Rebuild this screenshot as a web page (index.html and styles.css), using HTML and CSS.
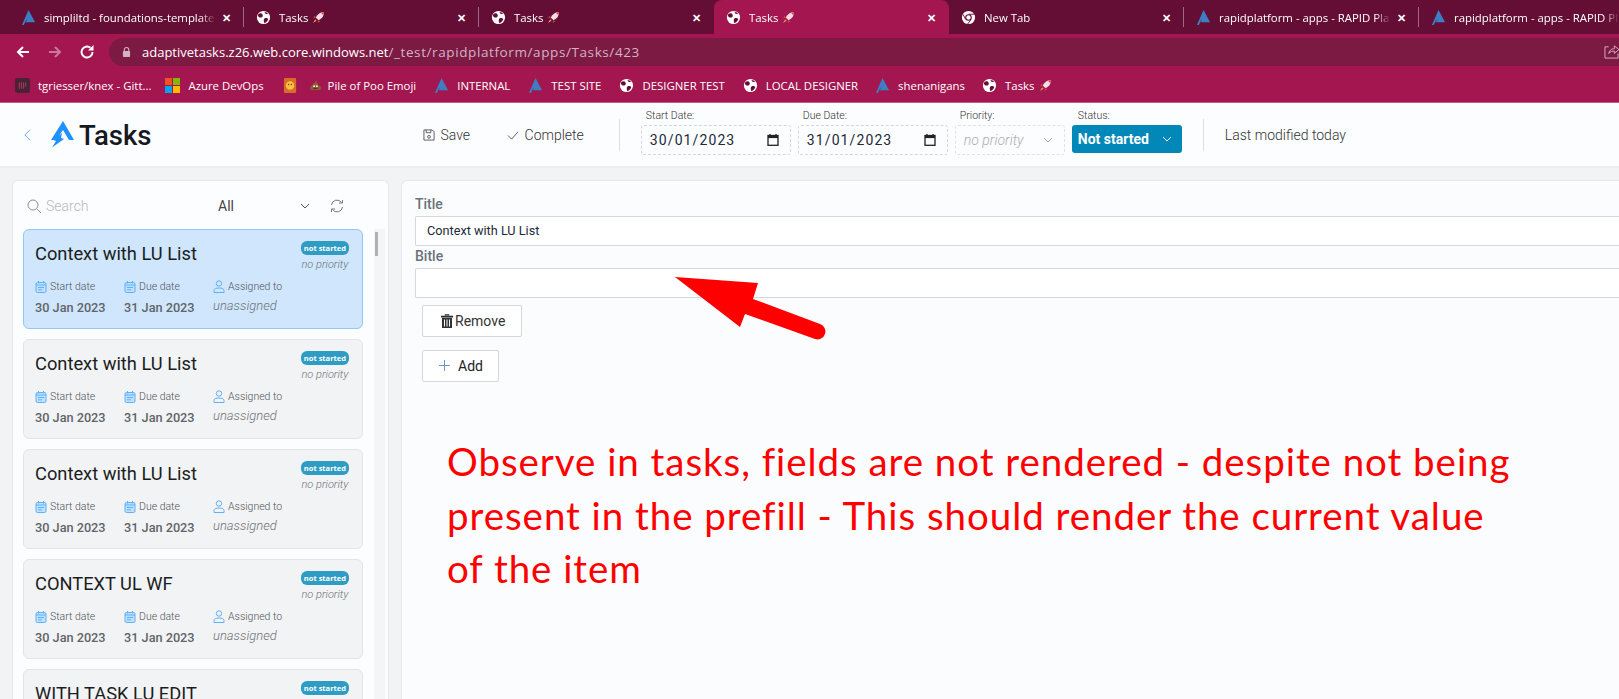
FILE: index.html
```html
<!DOCTYPE html>
<html lang="en">
<head>
  <meta charset="UTF-8" />
  <title>Tasks</title>
  <link rel="stylesheet" href="styles.css">
</head>
<body>

<svg class="defs" width="0" height="0">
  <symbol id="favA" viewBox="0 0 14 16">
    <path d="M7 0 L14 13 L10.500 13 L7 8.500 L4.500 11 L2 16 L0 16 Z" fill="#3d7fc4"/>
    <path d="M7 6 L11 13 L4 13 Z" fill="#3d7fc4"/>
  </symbol>
  <symbol id="globe" viewBox="0 0 16 16">
    <circle cx="8" cy="8" r="7" fill="#fff"/>
    <path d="M2 5 C4 3 6 3 7 5 C8 7 6 8 5 8 C3 8 2 7 2 5 Z M9 9 C11 8 13 9 13 10 C12 12 11 13 9 14 C8 12 8 10 9 9 Z M9 2 C11 2 12 3 13 4 C11 5 10 4 9 2 Z" fill="#640d35"/>
  </symbol>
  <symbol id="rocket" viewBox="0 0 14 14">
    <path d="M13 1 C9 1 6 3 4 7 L7 10 C11 8 13 5 13 1 Z" fill="#f3dfe4"/>
    <path d="M13 1 C11.500 1 10.500 1.300 9.500 1.800 L12.200 4.500 C12.700 3.500 13 2.500 13 1 Z" fill="#e0455a"/>
    <path d="M4 7 L1 8 L3 5 Z M7 10 L6 13 L9 11 Z" fill="#d9405a"/>
    <path d="M3.500 9 L5 10.500 L1 13 Z" fill="#f29b3f"/>
  </symbol>
  <symbol id="cal" viewBox="0 0 12 13">
    <rect x="1" y="2.500" width="10" height="10" rx="1.500" fill="#bfe0ff" stroke="#5fb0fb"/>
    <path d="M3.500 1 V3.500 M8.500 1 V3.500 M1 5 H11 M3 7.500 H9 M3 9.800 H7" fill="none" stroke="#5fb0fb"/>
  </symbol>
  <symbol id="user" viewBox="0 0 12 13">
    <circle cx="6" cy="3.500" r="2.700" fill="none" stroke="#5fb0fb"/>
    <path d="M1 12.500 V10.500 C1 8.800 3 8 6 8 C9 8 11 8.800 11 10.500 V12.500 Z" fill="none" stroke="#5fb0fb"/>
  </symbol>
  <symbol id="dateIcon" viewBox="0 0 12 12">
    <path d="M3 0 V2 M9 0 V2" stroke="#222" stroke-width="1.300"/>
    <rect x="1" y="1.500" width="10" height="9.800" fill="none" stroke="#222" stroke-width="1.300"/>
    <rect x="1" y="1.500" width="10" height="2.600" fill="#222"/>
  </symbol>
</svg>

<div class="tabstrip">
  <div class="tab sep">
    <svg class="fav"><use href="#favA"/></svg>
    <span class="tabText">simpliltd - foundations-template</span>
    <span class="tabClose">✕</span>
  </div>
  <div class="tab sep">
    <svg class="fav"><use href="#globe"/></svg>
    <span class="tabText">Tasks <svg class="rocket"><use href="#rocket"/></svg></span>
    <span class="tabClose">✕</span>
  </div>
  <div class="tab">
    <svg class="fav"><use href="#globe"/></svg>
    <span class="tabText">Tasks <svg class="rocket"><use href="#rocket"/></svg></span>
    <span class="tabClose">✕</span>
  </div>
  <div class="tab active">
    <svg class="fav"><use href="#globe"/></svg>
    <span class="tabText">Tasks <svg class="rocket"><use href="#rocket"/></svg></span>
    <span class="tabClose">✕</span>
  </div>
  <div class="tab sep">
    <svg class="fav" viewBox="0 0 16 16">
      <circle cx="8" cy="8" r="7" fill="#fff"/>
      <circle cx="8" cy="8" r="3.500" fill="#640d35"/>
      <circle cx="8" cy="8" r="2.300" fill="#fff"/>
      <path d="M8 4.500 H14.500 M5 10 L2 4.500 M10.500 10.500 L7 15" stroke="#640d35" stroke-width="1"/>
    </svg>
    <span class="tabText">New Tab</span>
    <span class="tabClose">✕</span>
  </div>
  <div class="tab sep">
    <svg class="fav"><use href="#favA"/></svg>
    <span class="tabText">rapidplatform - apps - RAPID Pla</span>
    <span class="tabClose">✕</span>
  </div>
  <div class="tab last">
    <svg class="fav"><use href="#favA"/></svg>
    <span class="tabText">rapidplatform - apps - RAPID Pl</span>
  </div>
</div>

<div class="toolbar">
  <svg class="navIcon" viewBox="0 0 16 16"><path d="M14 8 H3 M8 3 L3 8 L8 13" fill="none" stroke="#fff" stroke-width="2"/></svg>
  <svg class="navIcon" viewBox="0 0 16 16"><path d="M2 8 H13 M8 3 L13 8 L8 13" fill="none" stroke="#c9799b" stroke-width="2"/></svg>
  <svg class="navIcon" viewBox="0 0 16 16"><path d="M13.500 8 A5.500 5.500 0 1 1 11.500 3.800" fill="none" stroke="#fff" stroke-width="2"/><path d="M14.500 1 V6.500 H9 Z" fill="#fff"/></svg>
  <div class="omnibox">
    <svg class="lock" viewBox="0 0 10 12"><path d="M2.500 5 V3.500 A2.500 2.500 0 0 1 7.500 3.500 V5" fill="none" stroke="#d3b3c2" stroke-width="1.200"/><rect x="1" y="5" width="8" height="6.500" rx="1" fill="#d3b3c2"/></svg>
    <span class="host">adaptivetasks.z26.web.core.windows.net</span><span class="path">/_test/rapidplatform/apps/Tasks/423</span>
    <svg class="share" viewBox="0 0 16 16"><path d="M5 3 H1 V15 H15 V10 M5 10 C6 6 9 5 11 5 V2 L16 6 L11 10 V7.500 C9 7.500 7 8 5 10 Z" fill="none" stroke="#d3b3c2"/></svg>
  </div>
</div>

<div class="bookmarks">
  <div class="bm bmFirst"><svg class="fav" viewBox="0 0 14 14"><rect width="14" height="14" rx="2" fill="#4a2238"/><path d="M4 4 V10 M6 4 V10 M8 4 V10 M10 4 V8" stroke="#a03a52" stroke-width="1"/></svg>tgriesser/knex - Gitt...</div>
  <div class="bm bmAzure"><svg class="fav" viewBox="0 0 15 15"><rect width="7" height="7" fill="#f25022"/><rect x="8" width="7" height="7" fill="#7fba00"/><rect y="8" width="7" height="7" fill="#00a4ef"/><rect x="8" y="8" width="7" height="7" fill="#ffb900"/></svg>Azure DevOps</div>
  <div class="bm bmIcon"><svg class="fav" viewBox="0 0 14 16"><rect width="13" height="16" rx="1" fill="#d96b2b"/><circle cx="6.500" cy="8" r="4.500" fill="#f7c33c"/><circle cx="5" cy="7" r=".8" fill="#7a3b10"/><circle cx="8" cy="7" r=".8" fill="#7a3b10"/></svg></div>
  <div class="bm bmWide"><svg class="poo" viewBox="0 0 14 12"><path d="M7 1 C9 1 9 3 8.500 3.500 C10 3.500 10.500 5 10 6 C12 6 13 7.500 13 9 C13 10.500 12 11 10 11 H4 C2 11 1 10.500 1 9 C1 7.500 2 6 4 6 C3.500 5 4 3.500 5.500 3.500 C6.500 3 7 2 7 1 Z" fill="#8f5a38"/><circle cx="5.500" cy="6.800" r="1" fill="#fff"/><circle cx="8.500" cy="6.800" r="1" fill="#fff"/><path d="M4.500 9 H9.500" stroke="#3f2416"/></svg>Pile of Poo Emoji</div>
  <div class="bm bmWide"><svg class="fav"><use href="#favA"/></svg>INTERNAL</div>
  <div class="bm bmWide"><svg class="fav"><use href="#favA"/></svg>TEST SITE</div>
  <div class="bm bmWide"><svg class="fav"><use href="#globe"/></svg>DESIGNER TEST</div>
  <div class="bm"><svg class="fav"><use href="#globe"/></svg>LOCAL DESIGNER</div>
  <div class="bm"><svg class="fav"><use href="#favA"/></svg>shenanigans</div>
  <div class="bm"><svg class="fav"><use href="#globe"/></svg>Tasks <svg class="rocket"><use href="#rocket"/></svg></div>
</div>

<div class="header">
  <svg class="back" viewBox="0 0 8 14"><path d="M7 1 L1 7 L7 13" fill="none" stroke="#4d9cf5" stroke-width="1"/></svg>
  <svg class="logo" viewBox="0 0 23 27">
    <path d="M12 0 L23 19 H18 L12 9 L5 19 H0 Z" fill="#1e90ff"/>
    <path d="M11 12 L10 17 L13 18 L1 26.500 L5 20 L2.500 19 Z" fill="#1e90ff"/>
  </svg>
  <div class="appTitle">Tasks</div>
  <div class="action actSave">
    <svg class="actIcon" viewBox="0 0 13 13"><path d="M1 1 H10 L12 3 V12 H1 Z M3.500 1 V4 H8.500 V1" fill="none" stroke="#555"/><circle cx="6.500" cy="8.500" r="1.500" fill="none" stroke="#555"/></svg>
    Save
  </div>
  <div class="action actComplete">
    <svg class="actIcon" viewBox="0 0 13 13"><path d="M1 7 L5 11 L12 3" fill="none" stroke="#555"/></svg>
    Complete
  </div>
  <div class="vline"></div>
  <div class="field fieldDate">
    <label>Start Date:</label>
    <div class="dashed"><span>30/01/2023</span><svg class="dateIcon"><use href="#dateIcon"/></svg></div>
  </div>
  <div class="field fieldDate">
    <label>Due Date:</label>
    <div class="dashed"><span>31/01/2023</span><svg class="dateIcon"><use href="#dateIcon"/></svg></div>
  </div>
  <div class="field fieldPriority">
    <label>Priority:</label>
    <div class="dashed lightDash"><em>no priority</em><svg class="chev" viewBox="0 0 10 6"><path d="M1 1 L5 5 L9 1" fill="none" stroke="#aaa"/></svg></div>
  </div>
  <div class="field fieldStatus">
    <label>Status:</label>
    <div class="statusBtn"><span>Not started</span><svg class="chev" viewBox="0 0 10 6"><path d="M1 1 L5 5 L9 1" fill="none" stroke="#fff"/></svg></div>
  </div>
  <div class="vline vlineStatus"></div>
  <div class="modified">Last modified today</div>
</div>

<div class="content">
  <div class="sidebar">
    <div class="searchRow">
      <svg class="searchIcon" viewBox="0 0 15 15"><circle cx="6" cy="6" r="5" fill="none" stroke="#8a8f96"/><path d="M10 10 L14 14" stroke="#8a8f96"/></svg>
      <span class="searchText">Search</span>
      <span class="filterText">All</span>
      <svg class="filterChev" viewBox="0 0 10 6"><path d="M1 1 L5 5 L9 1" fill="none" stroke="#555"/></svg>
      <svg class="refresh" viewBox="0 0 14 14"><path d="M1.500 6 A5.500 5.500 0 0 1 11.500 3.500 M12.500 8 A5.500 5.500 0 0 1 2.500 10.500" fill="none" stroke="#777"/><path d="M9 4 H12.500 V1 M5 10 H1.500 V13" fill="none" stroke="#777"/></svg>
    </div>
    <div class="listWrap">
      <div class="list">
        <div class="card selected">
          <div class="cardTop"><div class="cardTitle">Context with LU List</div><div class="cardState"><span class="badge">not started</span><em>no priority</em></div></div>
          <div class="cardCols">
            <div class="col colDate"><div class="colLabel"><svg class="colIcon"><use href="#cal"/></svg>Start date</div><div class="colValue">30 Jan 2023</div></div>
            <div class="col colDate"><div class="colLabel"><svg class="colIcon"><use href="#cal"/></svg>Due date</div><div class="colValue">31 Jan 2023</div></div>
            <div class="col"><div class="colLabel"><svg class="colIcon"><use href="#user"/></svg>Assigned to</div><div class="colNone">unassigned</div></div>
          </div>
        </div>
        <div class="card">
          <div class="cardTop"><div class="cardTitle">Context with LU List</div><div class="cardState"><span class="badge">not started</span><em>no priority</em></div></div>
          <div class="cardCols">
            <div class="col colDate"><div class="colLabel"><svg class="colIcon"><use href="#cal"/></svg>Start date</div><div class="colValue">30 Jan 2023</div></div>
            <div class="col colDate"><div class="colLabel"><svg class="colIcon"><use href="#cal"/></svg>Due date</div><div class="colValue">31 Jan 2023</div></div>
            <div class="col"><div class="colLabel"><svg class="colIcon"><use href="#user"/></svg>Assigned to</div><div class="colNone">unassigned</div></div>
          </div>
        </div>
        <div class="card">
          <div class="cardTop"><div class="cardTitle">Context with LU List</div><div class="cardState"><span class="badge">not started</span><em>no priority</em></div></div>
          <div class="cardCols">
            <div class="col colDate"><div class="colLabel"><svg class="colIcon"><use href="#cal"/></svg>Start date</div><div class="colValue">30 Jan 2023</div></div>
            <div class="col colDate"><div class="colLabel"><svg class="colIcon"><use href="#cal"/></svg>Due date</div><div class="colValue">31 Jan 2023</div></div>
            <div class="col"><div class="colLabel"><svg class="colIcon"><use href="#user"/></svg>Assigned to</div><div class="colNone">unassigned</div></div>
          </div>
        </div>
        <div class="card">
          <div class="cardTop"><div class="cardTitle">CONTEXT UL WF</div><div class="cardState"><span class="badge">not started</span><em>no priority</em></div></div>
          <div class="cardCols">
            <div class="col colDate"><div class="colLabel"><svg class="colIcon"><use href="#cal"/></svg>Start date</div><div class="colValue">30 Jan 2023</div></div>
            <div class="col colDate"><div class="colLabel"><svg class="colIcon"><use href="#cal"/></svg>Due date</div><div class="colValue">31 Jan 2023</div></div>
            <div class="col"><div class="colLabel"><svg class="colIcon"><use href="#user"/></svg>Assigned to</div><div class="colNone">unassigned</div></div>
          </div>
        </div>
        <div class="card">
          <div class="cardTop"><div class="cardTitle">WITH TASK LU EDIT</div><div class="cardState"><span class="badge">not started</span></div></div>
        </div>
      </div>
      <div class="scrollTrack"><div class="scrollThumb"></div></div>
    </div>
  </div>

  <div class="mainPanel">
    <label class="formLabel">Title</label>
    <div class="formInput">Context with LU List</div>
    <label class="formLabel">Bitle</label>
    <div class="formInput"></div>
    <div class="formBtn btnRemove">
      <svg class="trash" viewBox="0 0 12 14"><path d="M4 1.500 V.5 H8 V1.500 M0 2 H12 V3.200 H0 Z" fill="#333" stroke="#333" stroke-width=".6"/><path d="M1 4 H11 V14 H1 Z" fill="#333"/><path d="M3.500 5.500 V12.500 M6 5.500 V12.500 M8.500 5.500 V12.500" stroke="#fff"/></svg>
      Remove
    </div>
    <div class="formBtn btnAdd">
      <svg class="plus" viewBox="0 0 12 12"><path d="M6 0 V12 M0 6 H12" stroke="#5b8fc4"/></svg>
      Add
    </div>
  </div>
</div>

<!-- screenshot markup on top of the page -->
<svg class="arrow" viewBox="0 0 160 70">
  <path d="M5 4 L88 10 L83 26 L150 51 A7.500 7.500 0 0 1 145 66 L75 41 L70 54 Z" fill="#ff0000"/>
</svg>
<div class="note">Observe in tasks, fields are not rendered - despite not being<br>present in the prefill - This should render the current value<br>of the item</div>

</body>
</html>
```

FILE: styles.css
```css
* {
  box-sizing: border-box;
}
html, body {
  margin: 0;
  height: 699px;
  overflow: hidden;
}
body {
  display: flex;
  flex-direction: column;
  position: relative;
  font-family: Roboto, sans-serif;
  background-color: #f2f3f5;
  color: #1f2328;
}
.defs {
  position: absolute;
}

/* browser chrome */
.tabstrip {
  flex: none;
  display: flex;
  height: 34px;
  padding-left: 8.500px;
  background-color: #640d35;
  color: #fff;
  font-family: "Open Sans", sans-serif;
  font-size: 11.400px;
  white-space: nowrap;
}
.tab {
  flex: 0 0 235px;
  display: flex;
  align-items: center;
  padding: 0 10px 0 12.500px;
  position: relative;
  min-width: 0;
}
.tab.last {
  flex: 0 1 227px;
  padding-right: 0;
}
.tab.sep::after {
  content: "";
  position: absolute;
  right: 0;
  top: 7px;
  height: 20px;
  width: 1px;
  background: #9c6a82;
}
.tab.active {
  background-color: #a31650;
  border-radius: 8px 8px 0 0;
}
.fav {
  width: 15px;
  height: 15px;
  flex: none;
  margin-right: 8px;
}
.tabText {
  flex: 1;
  min-width: 0;
  overflow: hidden;
  -webkit-mask-image: linear-gradient(to left, transparent 0, #000 16px);
  mask-image: linear-gradient(to left, transparent 0, #000 16px);
  display: flex;
  align-items: center;
  gap: 4px;
}
.rocket {
  width: 13px;
  height: 13px;
}
.tabClose {
  flex: none;
  width: 14px;
  margin-left: 4px;
  font-size: 11px;
  font-weight: 700;
  text-align: center;
}
.toolbar {
  flex: none;
  display: flex;
  align-items: center;
  height: 34px;
  padding: 2px 0 0 15px;
  background-color: #a31650;
}
.navIcon {
  width: 16px;
  height: 16px;
  margin-right: 16px;
  flex: none;
}
.omnibox {
  flex: 1;
  display: flex;
  align-items: center;
  height: 28px;
  margin-left: -2.500px;
  padding-left: 13.500px;
  border-radius: 14px 0 0 14px;
  background-color: #7c1a44;
  font-family: "Open Sans", sans-serif;
  font-size: 13px;
  white-space: nowrap;
  position: relative;
}
.lock {
  width: 9px;
  height: 12px;
  margin-right: 11px;
}
.host {
  color: #fff;
}
.path {
  color: #d3b3c2;
  font-size: 13.500px;
  letter-spacing: .6px;
}
.share {
  position: absolute;
  right: 0;
  top: 6px;
  width: 15px;
  height: 15px;
}
.bookmarks {
  flex: none;
  display: flex;
  align-items: center;
  gap: 17px;
  height: 35px;
  padding-left: 15px;
  background-color: #a31650;
  border-bottom: 1px solid #bd5a82;
  color: #fff;
  font-family: "Open Sans", sans-serif;
  font-size: 11.400px;
  white-space: nowrap;
}
.bm {
  display: flex;
  align-items: center;
}
.bmFirst {
  margin-right: -3px;
}
.bmAzure {
  margin-right: 2px;
}
.bmIcon {
  margin-right: -14px;
}
.bmWide {
  margin-right: 1px;
}
.poo {
  width: 13px;
  height: 11px;
  margin-right: 6px;
}
.bm .rocket {
  margin-left: 5px;
}

/* app header */
.header {
  flex: none;
  display: flex;
  align-items: center;
  height: 65px;
  background-color: #fcfdfe;
  border-bottom: 2px solid #eceef0;
}
.back {
  width: 7px;
  height: 14px;
  margin-left: 24px;
  flex: none;
}
.logo {
  width: 23px;
  height: 27px;
  margin-left: 19.500px;
  flex: none;
}
.appTitle {
  width: 72px;
  margin-left: 5.500px;
  padding-top: 2px;
  font-size: 27.500px;
  font-weight: 500;
  color: #16191d;
}
.action {
  display: flex;
  align-items: center;
  gap: 5.500px;
  font-size: 14px;
  font-weight: 300;
  color: #333;
}
.actSave {
  margin-left: 272px;
}
.actComplete {
  margin-left: 37px;
}
.actIcon {
  width: 12px;
  height: 12px;
}
.vline {
  width: 1px;
  height: 32px;
  background-color: #dcdee0;
  margin-left: 35px;
}
.field {
  align-self: flex-start;
  margin-top: 6px;
}
.field label {
  display: block;
  height: 16px;
  padding-left: 5px;
  font-size: 10.500px;
  font-weight: 300;
  line-height: 14px;
  color: #333;
}
.fieldDate {
  width: 150px;
  margin-left: 7px;
}
.vline + .fieldDate {
  margin-left: 21px;
}
.fieldPriority {
  width: 110px;
  margin-left: 7px;
}
.fieldStatus {
  width: 110px;
  margin-left: 7px;
}
.fieldStatus label {
  padding-left: 6px;
}
.dashed {
  display: flex;
  align-items: center;
  justify-content: space-between;
  height: 30px;
  padding: 0 11px 0 8px;
  border: 1px dashed #d5d7da;
  border-radius: 3px;
  font-size: 14px;
  letter-spacing: 1.100px;
  color: #1d2a3a;
}
.dateIcon {
  width: 12px;
  height: 12px;
}
.lightDash {
  border-color: #e2e3e5;
  letter-spacing: 0;
  color: #a9adb2;
}
.lightDash em {
  font-weight: 300;
}
.chev {
  width: 10px;
  height: 6px;
}
.statusBtn {
  display: flex;
  align-items: center;
  justify-content: space-between;
  height: 28px;
  padding: 0 10px 0 6px;
  border-radius: 3px;
  background-color: #0288b8;
  color: #fff;
  font-size: 14px;
  font-weight: 700;
}
.vlineStatus {
  margin-left: 21px;
}
.modified {
  margin-left: 21px;
  font-size: 14px;
  font-weight: 300;
  color: #333;
}

/* page body */
.content {
  flex: 1;
  min-height: 0;
  display: flex;
  align-items: stretch;
  padding: 12px 0 0 12px;
  gap: 12px;
}
.sidebar {
  flex: 0 0 377px;
  background-color: #fcfdfe;
  border: 1px solid #e6e8ea;
  border-bottom: none;
  border-radius: 6px 6px 0 0;
  display: flex;
  flex-direction: column;
  min-height: 0;
}
.searchRow {
  flex: none;
  display: flex;
  align-items: center;
  height: 48px;
  padding: 2px 0 0 14px;
  font-weight: 300;
}
.searchIcon {
  width: 15px;
  height: 15px;
  flex: none;
}
.searchText {
  margin-left: 4px;
  width: 172px;
  font-size: 14px;
  color: #b5b9be;
}
.filterText {
  width: 82px;
  font-size: 14px;
  font-weight: 400;
  color: #444;
}
.filterChev {
  width: 10px;
  height: 6px;
  flex: none;
}
.refresh {
  width: 14px;
  height: 14px;
  margin-left: 20px;
  flex: none;
}
.listWrap {
  flex: 1;
  min-height: 0;
  overflow: hidden;
  display: flex;
  padding-left: 10px;
}
.list {
  flex: 0 0 340px;
  display: flex;
  flex-direction: column;
  gap: 10px;
  overflow: hidden;
}
.card {
  flex: none;
  height: 100px;
  padding: 11px 13px 0 11px;
  background-color: #f2f3f5;
  border: 1px solid #e2e4e6;
  border-radius: 6px;
}
.card.selected {
  background-color: #cfe6fd;
  border-color: #90c8f8;
}
.cardTop {
  display: flex;
  justify-content: space-between;
  height: 37px;
}
.cardTitle {
  padding-top: 2px;
  font-size: 18.300px;
  color: #1a1d21;
}
.cardState {
  display: flex;
  flex-direction: column;
  align-items: center;
}
.badge {
  height: 14px;
  padding: 0 3px;
  border-radius: 6px;
  background-color: #2f9cc3;
  color: #fff;
  font-family: "Open Sans", sans-serif;
  font-size: 7.500px;
  font-weight: 700;
  line-height: 14px;
  white-space: nowrap;
}
.cardState em {
  margin-top: 3px;
  font-size: 11px;
  font-weight: 300;
  color: #6d7277;
}
.cardCols {
  display: flex;
}
.colDate {
  width: 89px;
}
.colLabel {
  display: flex;
  align-items: center;
  gap: 3px;
  height: 16px;
  font-size: 10.500px;
  font-weight: 300;
  color: #4f5459;
}
.colIcon {
  width: 12px;
  height: 13px;
}
.colValue {
  margin-top: 6px;
  font-size: 12.700px;
  font-weight: 500;
  color: #5f6468;
}
.colNone {
  margin-top: 4px;
  font-size: 13px;
  font-weight: 300;
  font-style: italic;
  color: #6d7277;
}
.scrollTrack {
  flex: 0 0 11px;
  margin-left: 11px;
  background-color: #f4f5f6;
}
.scrollThumb {
  width: 3px;
  height: 24px;
  margin: 3px 0 0 1px;
  background-color: #b0b3b6;
}
.mainPanel {
  flex: 1;
  min-width: 0;
  padding: 15px 0 0 13px;
  background-color: #fbfcfe;
  border: 1px solid #e6e8ea;
  border-right: none;
  border-bottom: none;
  border-radius: 6px 0 0 0;
}
.formLabel {
  display: block;
  height: 20px;
  font-size: 14px;
  font-weight: 500;
  line-height: 16px;
  color: #6c7278;
}
.formInput {
  height: 30px;
  padding: 0 11px;
  margin-bottom: 2px;
  background-color: #fff;
  border: 1px solid #d5d7da;
  border-right: none;
  border-radius: 2px 0 0 2px;
  font-size: 12.700px;
  line-height: 28px;
  color: #1d2a3a;
}
.formBtn {
  display: flex;
  align-items: center;
  height: 32px;
  margin-left: 7px;
  padding-bottom: 1px;
  background-color: #fff;
  border: 1px solid #d5d7da;
  border-radius: 2px;
  font-size: 14px;
  color: #333;
}
.btnRemove {
  width: 100px;
  margin-top: 7px;
  padding-left: 18px;
  gap: 2px;
}
.trash {
  width: 12px;
  height: 14px;
}
.btnAdd {
  width: 77px;
  margin-top: 13px;
  padding-left: 16px;
  gap: 8px;
  color: #222;
}
.plus {
  width: 11px;
  height: 11px;
}

/* red annotation */
.arrow {
  position: absolute;
  left: 670px;
  top: 273px;
  width: 160px;
  height: 70px;
}
.note {
  position: absolute;
  left: 447px;
  top: 435px;
  font-family: Lato, "Open Sans", sans-serif;
  font-size: 38.500px;
  letter-spacing: .95px;
  line-height: 53.700px;
  color: #ff0000;
  white-space: nowrap;
}
```
